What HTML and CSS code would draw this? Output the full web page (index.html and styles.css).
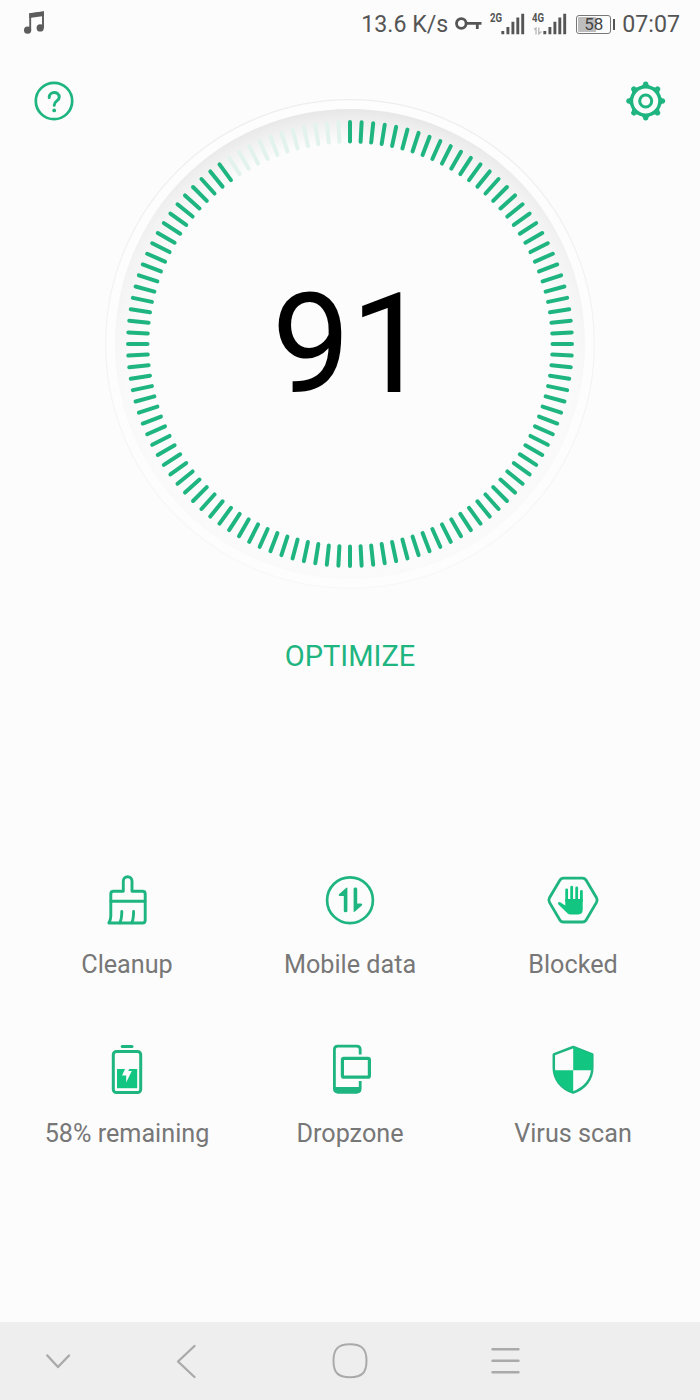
FILE: index.html
```
<!DOCTYPE html>
<html lang="en">

<head>
    <meta charset="UTF-8">
    <meta name="viewport" content="width=device-width, initial-scale=1.0">
    <title>Phone Manager</title>
    <link rel="stylesheet" href="styles.css">
</head>

<body>
    <header class="status_bar">
        <svg class="music" width="24" height="26" viewBox="0 0 24 26">
            <path d="M7.2 20V4.2L20 2.4V18" fill="none" stroke="#5c5c5c" stroke-width="1.9" />
            <path d="M6.3 3.4L21 1.4V6L6.3 8Z" fill="#5c5c5c" />
            <circle cx="4.6" cy="20.2" r="3.6" fill="#5c5c5c" />
            <circle cx="17.2" cy="17.9" r="3.6" fill="#5c5c5c" />
        </svg>
        <span class="speed">13.6 K/s</span>
        <svg class="key" width="27" height="16" viewBox="0 0 27 16">
            <circle cx="6.3" cy="7.5" r="4.8" fill="none" stroke="#555" stroke-width="2.8" />
            <path d="M11 7.3H26.5M22.3 7.3V13" fill="none" stroke="#555" stroke-width="2.8" />
        </svg>
        <div class="sim">
            <span class="net">2G</span>
            <svg width="24" height="22" viewBox="0 0 24 22">
                <path d="M1.8 18V21.2M6.9 14V21.2M11.9 8.8V21.2M16.8 4.5V21.2M21.7 .8V21.2" stroke="#555" stroke-width="2.9" fill="none" />
            </svg>
        </div>
        <div class="sim">
            <span class="net">4G</span>
            <svg class="updown" width="10" height="8" viewBox="0 0 10 8">
                <path d="M1 2.5L3 1V7.5M5.8 .5V7L8.5 4.5" fill="none" stroke="#bbb" stroke-width="1.4" />
            </svg>
            <svg width="24" height="22" viewBox="0 0 24 22">
                <path d="M1.8 18V21.2M6.9 14V21.2M11.9 8.8V21.2M16.8 4.5V21.2M21.7 .8V21.2" stroke="#555" stroke-width="2.9" fill="none" />
            </svg>
        </div>
        <div class="battery"><span>58</span></div>
        <span class="clock">07:07</span>
    </header>

    <main>
        <div class="top">
            <svg width="40" height="40" viewBox="0 0 40 40" fill="none" stroke="#1fb580" stroke-width="2.7">
                <circle cx="20" cy="20" r="18.2" />
                <path d="M15.2 16.4C15.2 10 25.2 10 25.2 16.2C25.2 20 20.2 19.8 20.2 24.2" stroke-linecap="round" stroke-width="3" />
                <circle cx="20.2" cy="29.4" r="1.9" fill="#1fb580" stroke="none" />
            </svg>

            <svg class="dial" width="490" height="490" viewBox="-245 -245 490 490">
                <defs>
                    <linearGradient id="shade" x1="0" y1="0" x2="0" y2="1">
                        <stop offset="0" stop-color="#e7e7e7" />
                        <stop offset=".25" stop-color="#f0f0f0" />
                        <stop offset=".6" stop-color="#f9f9f9" />
                        <stop offset="1" stop-color="#fafafa" />
                    </linearGradient>
                    <linearGradient id="rim" x1="0" y1="0" x2="0" y2="1">
                        <stop offset="0" stop-color="#eeeeee" />
                        <stop offset="1" stop-color="#f8f8f8" />
                    </linearGradient>
                    <radialGradient id="face">
                        <stop offset=".86" stop-color="#fcfcfc" />
                        <stop offset="1" stop-color="#fcfcfc" stop-opacity="0" />
                    </radialGradient>
                </defs>
                <circle r="244.3" fill="#fdfdfd" stroke="url(#rim)" stroke-width="1.2" />
                <circle r="235" fill="url(#shade)" />
                <circle r="235" fill="url(#face)" />
                <g id="ticks"></g>
                <text class="score" x="0.5" y="47.5">91</text>
            </svg>

            <svg width="40" height="40" viewBox="0 0 40 40" fill="none" stroke="#1fb580">
                <circle cx="19.7" cy="20" r="14.2" stroke-width="3.4" />
                <circle cx="19.7" cy="20" r="6" stroke-width="3" />
                <g id="teeth" fill="#1fb580" stroke="none"></g>
            </svg>
        </div>

        <div class="optimize">OPTIMIZE</div>

        <div class="tools">
            <div class="tool">
                <svg width="56" height="56" viewBox="0 0 56 56" fill="none" stroke="#1fb580" stroke-width="2.9" stroke-linecap="round" stroke-linejoin="round">
                    <path d="M24.3 19.3V9.2C24.3 3.2 33 3.2 33 9.2V19.3H43.5Q46.2 19.3 46.2 22V48.2Q46.2 51 43.5 51H9.8C11.4 48.8 11.8 47 11.8 44V22Q11.8 19.3 14.5 19.3Z" />
                    <path d="M12 29.3H46M22.8 39.5C22.8 45 22.5 47.5 20.8 50.8M34.6 39.5C34.6 45 34.4 47.5 32.8 50.8" />
                </svg>
                <span>Cleanup</span>
            </div>
            <div class="tool">
                <svg width="56" height="56" viewBox="0 0 56 56" fill="none" stroke="#1fb580" stroke-width="2.7">
                    <circle cx="28" cy="28.2" r="22.9" />
                    <path d="M25.4 16.3Q25.4 15 24 16L17 22.2Q16 24 17.8 24H21.8V39Q21.8 40.3 23.6 40.3Q25.4 40.3 25.4 39Z" fill="#1fb580" stroke="none" />
                    <path d="M31.6 39.3Q31.6 40.6 33 39.6L39.8 33.4Q41 31.6 39 31.6H35.2V17Q35.2 15.6 33.4 15.6Q31.6 15.6 31.6 17Z" fill="#1fb580" stroke="none" />
                </svg>
                <span>Mobile data</span>
            </div>
            <div class="tool">
                <svg width="56" height="56" viewBox="0 0 56 56" fill="none" stroke="#1fb580" stroke-width="2.8" stroke-linejoin="round">
                    <path d="M18.5 6.2H37.5Q40 6.2 41.3 8.5L51.5 25.8Q52.8 28.1 51.5 30.4L41.3 47.7Q40 50 37.5 50H18.5Q16 50 14.7 47.7L4.5 30.4Q3.2 28.1 4.5 25.8L14.7 8.5Q16 6.2 18.5 6.2Z" />
                    <path d="M20.3 27V33.6L14.8 30.1Q12.2 30.4 13.4 32.6L22.7 41.5Q24 42.4 25.4 42.4H33.3Q37.7 42.4 37.7 37.5V27Z" fill="#12c580" stroke="none" />
                    <path d="M21.7 29V17.8M26.7 29V15.2M31.7 29V16M36.4 29V19.3" stroke="#12c580" stroke-width="2.8" stroke-linecap="round" />
                    <path d="M24.2 17V27M29.2 17V27M34.1 19V27" stroke="#fcfcfc" stroke-width="1.5" />
                </svg>
                <span>Blocked</span>
            </div>
            <div class="tool">
                <svg width="56" height="56" viewBox="0 0 56 56" fill="none" stroke="#1fb580" stroke-width="3">
                    <path d="M23.2 5.5H33" stroke-width="3" stroke-linecap="round" />
                    <rect x="14.3" y="10.4" width="27.4" height="41.2" rx="3.2" />
                    <path d="M18 28H38.2V47.2H18Z" fill="#12c580" stroke="none" />
                    <path d="M26.4 27.2L23 34.4H27.2V41.4L32.8 30H29.2L30.8 27.2Z" fill="#fcfcfc" stroke="none" />
                </svg>
                <span>58% remaining</span>
            </div>
            <div class="tool">
                <svg width="56" height="56" viewBox="0 0 56 56" fill="none" stroke="#1fb580" stroke-width="2.8">
                    <path d="M38.2 13.6V8.6Q38.2 5.2 34.8 5.2H15.8Q12.4 5.2 12.4 8.6V47.6Q12.4 51 15.8 51H34.8Q38.2 51 38.2 47.6V40" />
                    <path d="M12 46H39V48.6Q39 52.4 35 52.4H15.8Q12 52.4 12 48.6Z" fill="#1fb580" stroke="none" />
                    <rect x="20.4" y="17.4" width="27" height="18.8" rx="1.5" stroke-width="3.2" />
                </svg>
                <span>Dropzone</span>
            </div>
            <div class="tool">
                <svg width="56" height="56" viewBox="0 0 56 56" fill="none" stroke="#1fb580" stroke-width="2.5" stroke-linejoin="round">
                    <path d="M28.2 6L47.3 13.3V27C47.3 38 40 47.5 28.2 51.5C16 47.5 8.8 38 8.8 27V13.3Z" />
                    <path d="M28.2 6L47.3 13.3V29.2H28.2ZM28.2 29.2V51.5C16 47.5 9.6 39.5 8.8 29.2Z" fill="#12c580" stroke="none" />
                </svg>
                <span>Virus scan</span>
            </div>
        </div>
    </main>

    <nav class="nav_bar">
        <svg width="700" height="78" viewBox="0 0 700 78" fill="none" stroke="#aaa" stroke-width="2.4" stroke-linecap="round" stroke-linejoin="round">
            <path d="M47.3 33.5L58 45L69 33.5" />
            <path d="M194.5 24L178 39.5L194.5 55" />
            <path d="M350 22.3C362.5 22.3 366.5 27.5 366.5 38.8C366.5 50.1 362.5 55.3 350 55.3C337.5 55.3 333.5 50.1 333.5 38.8C333.5 27.5 337.5 22.3 350 22.3Z" stroke-width="2" />
            <path d="M492.5 27.3H518.5M492.5 38.8H518.5M492.5 50.3H518.5" />
        </svg>
    </nav>

    <script src="script.js"></script>
</body>

</html>
```
FILE: styles.css
```
body {
    margin: 0;
    height: 1400px;
    display: flex;
    flex-direction: column;
    background-color: #fcfcfc;
    font-family: Roboto, sans-serif;
    overflow: hidden;
}

main {
    flex: 1;
}

.status_bar {
    display: flex;
    align-items: center;
    height: 48px;
    padding: 0 20px 0 23px;
    color: #555;
    font-size: 23.2px;
}

.music {
    margin-right: auto;
    margin-bottom: 2px;
}

.key {
    margin-left: 7px;
    margin-right: 8px;
}

.sim {
    position: relative;
    display: flex;
    justify-content: flex-end;
    width: 35px;
    margin-right: 7px;
}

.net {
    position: absolute;
    left: 0;
    top: -1px;
    font-size: 12px;
    font-weight: bold;
    line-height: 12px;
    transform: scaleX(.8);
    transform-origin: left;
}

.updown {
    position: absolute;
    left: 1px;
    top: 14px;
}

.battery {
    position: relative;
    box-sizing: border-box;
    width: 35px;
    height: 19px;
    margin-left: 2px;
    margin-right: 11px;
    border: 1.5px solid #777;
    border-radius: 3px;
    background: linear-gradient(90deg, #bdbdbd 58%, #fcfcfc 58%);
    background-clip: content-box;
    padding: 1px;
    font-size: 17px;
    line-height: 15px;
    text-align: center;
    color: #444;
}

.battery::after {
    content: "";
    position: absolute;
    right: -5px;
    top: 3px;
    width: 2px;
    height: 11px;
    background-color: #555;
}

.top {
    display: flex;
    justify-content: space-between;
    padding: 33px 34px 0;
}

.dial {
    margin-top: 18px;
}

.tick {
    stroke: #1fb580;
    stroke-width: 4;
    stroke-linecap: round;
}

.tick.off {
    stroke: #e2f2ec;
}

.score {
    font-size: 140px;
    text-anchor: middle;
    fill: #000;
}

.optimize {
    margin-top: 49px;
    font-size: 29px;
    line-height: 36px;
    text-align: center;
    color: #1fb580;
}

.tools {
    display: grid;
    grid-template-columns: repeat(3, 223px);
    justify-content: center;
    row-gap: 54px;
    margin-top: 198px;
}

.tool {
    display: flex;
    flex-direction: column;
    align-items: center;
    height: 115px;
    font-size: 25.2px;
    color: #777;
}

.tool span {
    margin-top: 20px;
    line-height: 33px;
}

.nav_bar {
    height: 78px;
    background-color: #eee;
}
```
FILE: script.js
```
const SVG_NS = "http://www.w3.org/2000/svg";
const TICKS = 120;
const SCORE = 91;

let ticks = document.getElementById("ticks");
let teeth = document.getElementById("teeth");
let active = Math.floor(TICKS * SCORE / 100);

for (let i = 0; i < TICKS; i++) {
    let line = document.createElementNS(SVG_NS, "line");
    line.setAttribute("y1", -222);
    line.setAttribute("y2", -202.5);
    line.setAttribute("class", i < active ? "tick" : "tick off");
    line.setAttribute("transform", "rotate(" + i * 360 / TICKS + ")");
    ticks.appendChild(line);
}

// settings gear
for (let i = 0; i < 8; i++) {
    let tooth = document.createElementNS(SVG_NS, "path");
    tooth.setAttribute("d", "M14.7 6.5L17.2 3V1.8Q19.7 -.9 22.2 1.8V3L24.7 6.5Z");
    tooth.setAttribute("transform", "rotate(" + i * 45 + " 19.7 20)");
    teeth.appendChild(tooth);
}
```
